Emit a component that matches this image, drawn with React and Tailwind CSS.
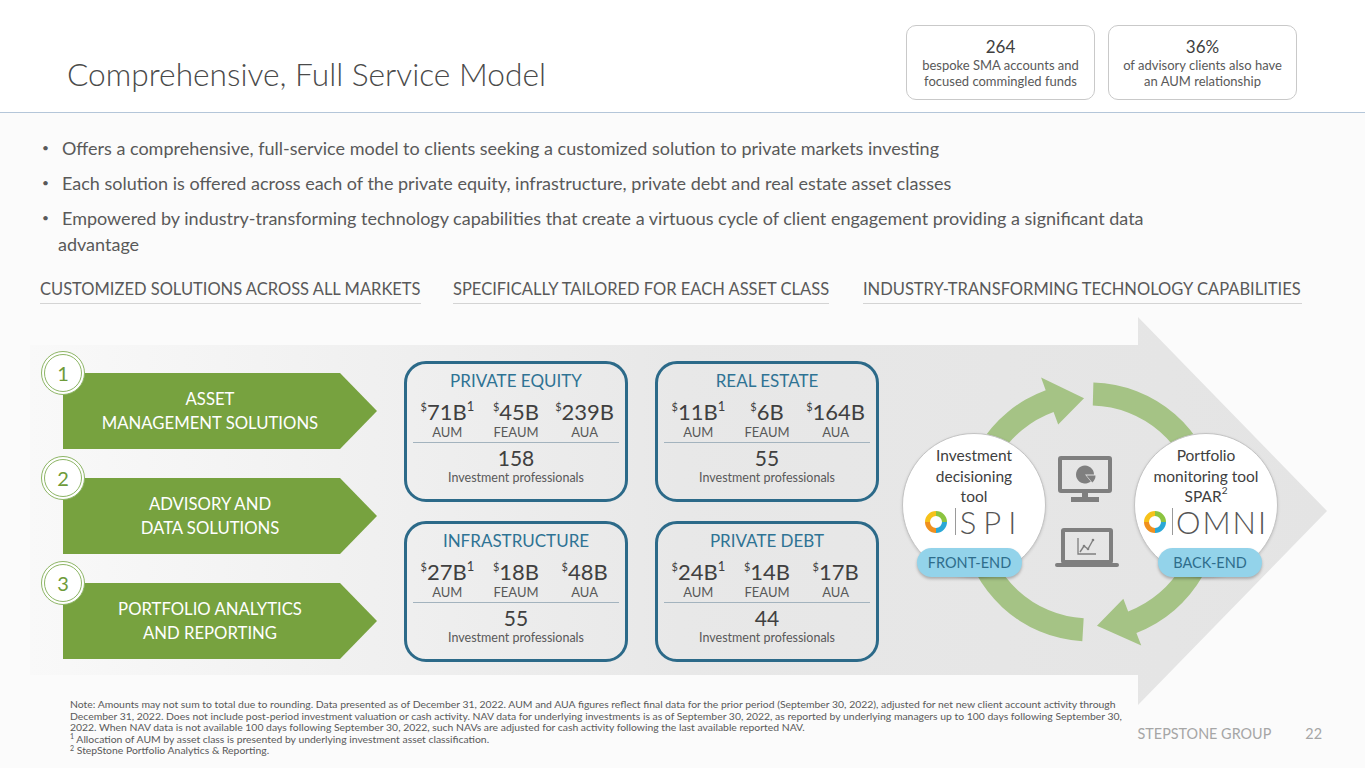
import React from "react";

const LABELS = ["AUM", "FEAUM", "AUA"];
const ASSETS = [
  { title: "PRIVATE EQUITY", vals: ["71B", "45B", "239B"], n: "158" },
  { title: "REAL ESTATE", vals: ["11B", "6B", "164B"], n: "55" },
  { title: "INFRASTRUCTURE", vals: ["27B", "18B", "48B"], n: "55" },
  { title: "PRIVATE DEBT", vals: ["24B", "14B", "17B"], n: "44" },
];

function AssetBox({ title, vals, n }) {
  return (
    <div className="h-[141px] rounded-[22px] border-[3px] border-[#2c6a89] flex flex-col items-center px-[6px]">
      <div className="mt-[4px] leading-[26px] text-[17px] text-[#2f7394]">{title}</div>
      <div className="mt-[5px] grid grid-cols-3 w-full">
        {vals.map((v, i) => (
          <div key={i} className="flex flex-col items-center">
            <div className="leading-[26px] text-[22px] text-[#404040] whitespace-nowrap">
              <sup className="text-[11px] top-[-0.85em]">$</sup>
              {v}
              {i === 0 && <sup className="text-[13px] top-[-0.7em]">1</sup>}
            </div>
            <div className="leading-[14px] text-[13px] text-[#595959]">{LABELS[i]}</div>
          </div>
        ))}
      </div>
      <div className="mt-[3px] h-px w-full bg-[#a3b3be]" />
      <div className="mt-[3px] leading-[24px] text-[21px] text-[#404040]">{n}</div>
      <div className="leading-[16px] text-[12.5px] text-[#595959]">Investment professionals</div>
    </div>
  );
}

function Chevron({ num, lines }) {
  return (
    <div className="relative h-[76px] w-[314px]">
      <div className="h-full w-full bg-[#77a23f] [clip-path:polygon(0_0,277px_0,100%_50%,277px_100%,0_100%)] flex flex-col items-center justify-center pr-[20px] text-white text-[16.7px] leading-[24px]">
        {lines.map((l) => (
          <div key={l} className="whitespace-nowrap">{l}</div>
        ))}
      </div>
      <div className="absolute left-[-22px] top-[-22px] w-[44px] h-[44px] rounded-full bg-white border border-[#8db565] p-[2px]">
        <div className="w-full h-full rounded-full border border-[#8db565] flex items-center justify-center text-[20px] text-[#6e9b3a]">
          {num}
        </div>
      </div>
    </div>
  );
}

function RingLogo() {
  return (
    <svg width="22" height="22" viewBox="0 0 22 22">
      <path d="M11 2.5 A8.5 8.5 0 0 0 2.5 11" fill="none" stroke="#f6c21a" strokeWidth="5" />
      <path d="M2.5 11 A8.5 8.5 0 0 0 11 19.5" fill="none" stroke="#f0901e" strokeWidth="5" />
      <path d="M11 19.5 A8.5 8.5 0 0 0 19.5 11" fill="none" stroke="#2aa8d6" strokeWidth="5" />
      <path d="M19.5 11 A8.5 8.5 0 0 0 11 2.5" fill="none" stroke="#8cc440" strokeWidth="5" />
    </svg>
  );
}

function Monitor() {
  return (
    <svg width="54" height="46" viewBox="0 0 54 46">
      <rect x="2" y="2" width="50" height="33" rx="1" fill="none" stroke="#7f7f7f" strokeWidth="4" />
      <rect x="24" y="35" width="6" height="6" fill="#7f7f7f" />
      <rect x="13" y="41" width="28" height="5" fill="#7f7f7f" />
      <path d="M27 18.5 L32.79 25.39 A9 9 0 1 1 36 18.5 Z" fill="#7f7f7f" />
      <path d="M28.5 19.5 L37.5 19.5 A9 9 0 0 1 34.29 26.39 Z" fill="#7f7f7f" />
    </svg>
  );
}

function Laptop() {
  return (
    <svg width="64" height="40" viewBox="0 0 64 40">
      <rect x="8" y="2" width="48" height="32" rx="1" fill="none" stroke="#7f7f7f" strokeWidth="4" />
      <path d="M23 10 L23 26 L41 26" fill="none" stroke="#7f7f7f" strokeWidth="1.3" />
      <polyline points="25,24 29,18 33,21 38,12" fill="none" stroke="#7f7f7f" strokeWidth="1.4" />
      <circle cx="29" cy="18" r="1.3" fill="#7f7f7f" />
      <circle cx="33" cy="21" r="1.3" fill="#7f7f7f" />
      <circle cx="38" cy="12" r="1.3" fill="#7f7f7f" />
      <rect x="0" y="35" width="64" height="4" rx="2" fill="#7f7f7f" />
    </svg>
  );
}

function arrowPath(cx, cy, r, hw, hh, a0, aBase, aTip) {
  const p = (rad, deg) => {
    const t = (deg * Math.PI) / 180;
    return `${(cx + rad * Math.cos(t)).toFixed(2)} ${(cy + rad * Math.sin(t)).toFixed(2)}`;
  };
  const large = aBase - a0 > 180 ? 1 : 0;
  return [
    `M ${p(r + hw, a0)}`,
    `A ${r + hw} ${r + hw} 0 ${large} 1 ${p(r + hw, aBase)}`,
    `L ${p(r + hh, aBase)}`,
    `L ${p(r - 4, aTip)}`,
    `L ${p(r - hh, aBase)}`,
    `L ${p(r - hw, aBase)}`,
    `A ${r - hw} ${r - hw} 0 ${large} 0 ${p(r - hw, a0)}`,
    "Z",
  ].join(" ");
}

function Cycle() {
  const a1 = arrowPath(200, 195, 118, 11.5, 25, 93.4, 250, 267);
  const a2 = arrowPath(200, 195, 118, 11.5, 25, 271.5, 429, 446.5);
  return (
    <div className="relative w-[410px] h-[382px]">
      <svg className="absolute left-0 top-0" width="410" height="382" viewBox="0 0 410 382">
        <path d={a1} fill="#a5c385" />
        <path d={a2} fill="#a5c385" />
      </svg>
      <div className="absolute left-[168px] top-[139px]"><Monitor /></div>
      <div className="absolute left-[165px] top-[211px]"><Laptop /></div>

      <div className="absolute left-[12px] top-[116px] w-[144px] h-[144px] rounded-full bg-white border border-[#c4c4c4] shadow-[0_1px_3px_rgba(0,0,0,0.15)] flex flex-col items-center pt-[11px] text-[#404040] text-[15.5px] leading-[20.5px]">
        <div>Investment</div>
        <div>decisioning</div>
        <div>tool</div>
        <div className="flex items-center mt-[1px] h-[28px]">
          <RingLogo />
          <div className="ml-[8px] w-px h-[27px] bg-[#9a9a9a]" />
          <div className="ml-[4px] text-[31px] font-light leading-[28px] tracking-[7px] text-[#555]">SPI</div>
        </div>
      </div>
      <div className="absolute left-[244px] top-[116px] w-[144px] h-[144px] rounded-full bg-white border border-[#c4c4c4] shadow-[0_1px_3px_rgba(0,0,0,0.15)] flex flex-col items-center pt-[11px] text-[#404040] text-[15.5px] leading-[20.5px]">
        <div>Portfolio</div>
        <div className="whitespace-nowrap">monitoring tool</div>
        <div>
          SPAR<sup className="text-[10px] top-[-0.8em]">2</sup>
        </div>
        <div className="flex items-center mt-[1px] h-[28px]">
          <RingLogo />
          <div className="ml-[6px] w-px h-[27px] bg-[#9a9a9a]" />
          <div className="ml-[3px] text-[31px] font-light leading-[28px] tracking-[2px] text-[#555]">OMNI</div>
        </div>
      </div>

      <div className="absolute left-[27px] top-[231px] w-[105px] h-[29px] rounded-full bg-[#93d3ea] shadow-[0_2px_3px_rgba(0,0,0,0.25)] flex items-center justify-center text-[14.5px] text-[#2e6d8c]">
        FRONT-END
      </div>
      <div className="absolute left-[268px] top-[231px] w-[104px] h-[29px] rounded-full bg-[#93d3ea] shadow-[0_2px_3px_rgba(0,0,0,0.25)] flex items-center justify-center text-[14.5px] text-[#2e6d8c]">
        BACK-END
      </div>
    </div>
  );
}

export default function App() {
  return (
    <div className="w-[1365px] h-[768px] overflow-hidden bg-white font-['Lato',sans-serif] text-[#595959] flex flex-col">
      <header className="h-[113px] shrink-0 flex items-start justify-between border-b border-[#b4c6d9]">
        <h1 className="pl-[67px] pt-[54px] text-[31.7px] leading-[40px] font-light text-[#4a4a4a] whitespace-nowrap">
          Comprehensive, Full Service Model
        </h1>
        <div className="flex gap-[13px] pt-[25px] pr-[68px]">
          <div className="w-[189px] h-[75px] rounded-[10px] border border-[#c9c9c9] flex flex-col items-center justify-center">
            <div className="text-[17px] leading-[20px] text-[#404040]">264</div>
            <div className="text-[13px] leading-[16px] text-[#595959]">bespoke SMA accounts and</div>
            <div className="text-[13px] leading-[16px] text-[#595959]">focused commingled funds</div>
          </div>
          <div className="w-[189px] h-[75px] rounded-[10px] border border-[#c9c9c9] flex flex-col items-center justify-center">
            <div className="text-[17px] leading-[20px] text-[#404040]">36%</div>
            <div className="text-[13px] leading-[16px] text-[#595959]">of advisory clients also have</div>
            <div className="text-[13px] leading-[16px] text-[#595959]">an AUM relationship</div>
          </div>
        </div>
      </header>

      <main className="flex-1 bg-[#fbfbfb] flex flex-col">
        <ul className="pt-[22px] pl-[42px] text-[18px] leading-[26px] text-[#595959]">
          <li className="flex mb-[9px]">
            <span className="w-[20px] shrink-0 text-[12px]">•</span>
            <span>Offers a comprehensive, full-service model to clients seeking a customized solution to private markets investing</span>
          </li>
          <li className="flex mb-[9px]">
            <span className="w-[20px] shrink-0 text-[12px]">•</span>
            <span>Each solution is offered across each of the private equity, infrastructure, private debt and real estate asset classes</span>
          </li>
          <li className="flex flex-col">
            <div className="flex">
              <span className="w-[20px] shrink-0 text-[12px]">•</span>
              <span className="whitespace-nowrap">Empowered by industry-transforming technology capabilities that create a virtuous cycle of client engagement providing a significant data</span>
            </div>
            <div className="pl-[16px]">advantage</div>
          </li>
        </ul>

        <div className="mt-[20px] flex pl-[40px] text-[16.5px] leading-[24px] text-[#595959]">
          <div className="w-[381px] pb-[2px] border-b border-[#d4d4d4] whitespace-nowrap">CUSTOMIZED SOLUTIONS ACROSS ALL MARKETS</div>
          <div className="ml-[32px] w-[376px] pb-[2px] border-b border-[#d4d4d4] whitespace-nowrap">SPECIFICALLY TAILORED FOR EACH ASSET CLASS</div>
          <div className="ml-[34px] w-[439px] pb-[2px] border-b border-[#d4d4d4] whitespace-nowrap">INDUSTRY-TRANSFORMING TECHNOLOGY CAPABILITIES</div>
        </div>

        <section className="relative mt-[13px] h-[382px] shrink-0 flex">
          <svg className="absolute left-0 top-0 overflow-visible" width="1365" height="388" viewBox="0 0 1365 388">
            <defs>
              <linearGradient id="bg" x1="0" x2="1" y1="0" y2="0">
                <stop offset="0" stopColor="#f9f9f9" />
                <stop offset="0.5" stopColor="#e8e8e8" />
                <stop offset="1" stopColor="#e4e4e4" />
              </linearGradient>
            </defs>
            <polygon points="30,28 1138,28 1138,0 1327,194 1138,388 1138,358 30,358" fill="url(#bg)" />
          </svg>

          <div className="relative flex flex-col gap-[29px] pl-[63px] pt-[56px]">
            <Chevron num="1" lines={["ASSET", "MANAGEMENT SOLUTIONS"]} />
            <Chevron num="2" lines={["ADVISORY AND", "DATA SOLUTIONS"]} />
            <Chevron num="3" lines={["PORTFOLIO ANALYTICS", "AND REPORTING"]} />
          </div>

          <div className="relative ml-[27px] pt-[44px] grid grid-cols-[224px_224px] gap-x-[27px] gap-y-[19px] content-start">
            {ASSETS.map((a) => (
              <AssetBox key={a.title} {...a} />
            ))}
          </div>

          <div className="relative ml-[11px]">
            <Cycle />
          </div>
        </section>

        <footer className="relative flex">
          <div className="pl-[70px] text-[10.4px] leading-[11.5px] text-[#595959] whitespace-nowrap">
            <div>Note: Amounts may not sum to total due to rounding. Data presented as of December 31, 2022. AUM and AUA figures reflect final data for the prior period (September 30, 2022), adjusted for net new client account activity through</div>
            <div>December 31, 2022. Does not include post-period investment valuation or cash activity. NAV data for underlying investments is as of September 30, 2022, as reported by underlying managers up to 100 days following September 30,</div>
            <div>2022. When NAV data is not available 100 days following September 30, 2022, such NAVs are adjusted for cash activity following the last available reported NAV.</div>
            <div><sup className="text-[7px]">1</sup> Allocation of AUM by asset class is presented by underlying investment asset classification.</div>
            <div><sup className="text-[7px]">2</sup> StepStone Portfolio Analytics &amp; Reporting.</div>
          </div>
          <div className="ml-auto pr-[43px] pt-[25px] flex text-[14.4px] leading-[20px] text-[#a6a6a6]">
            <span>STEPSTONE GROUP</span>
            <span className="ml-[34px]">22</span>
          </div>
        </footer>
      </main>
    </div>
  );
}
